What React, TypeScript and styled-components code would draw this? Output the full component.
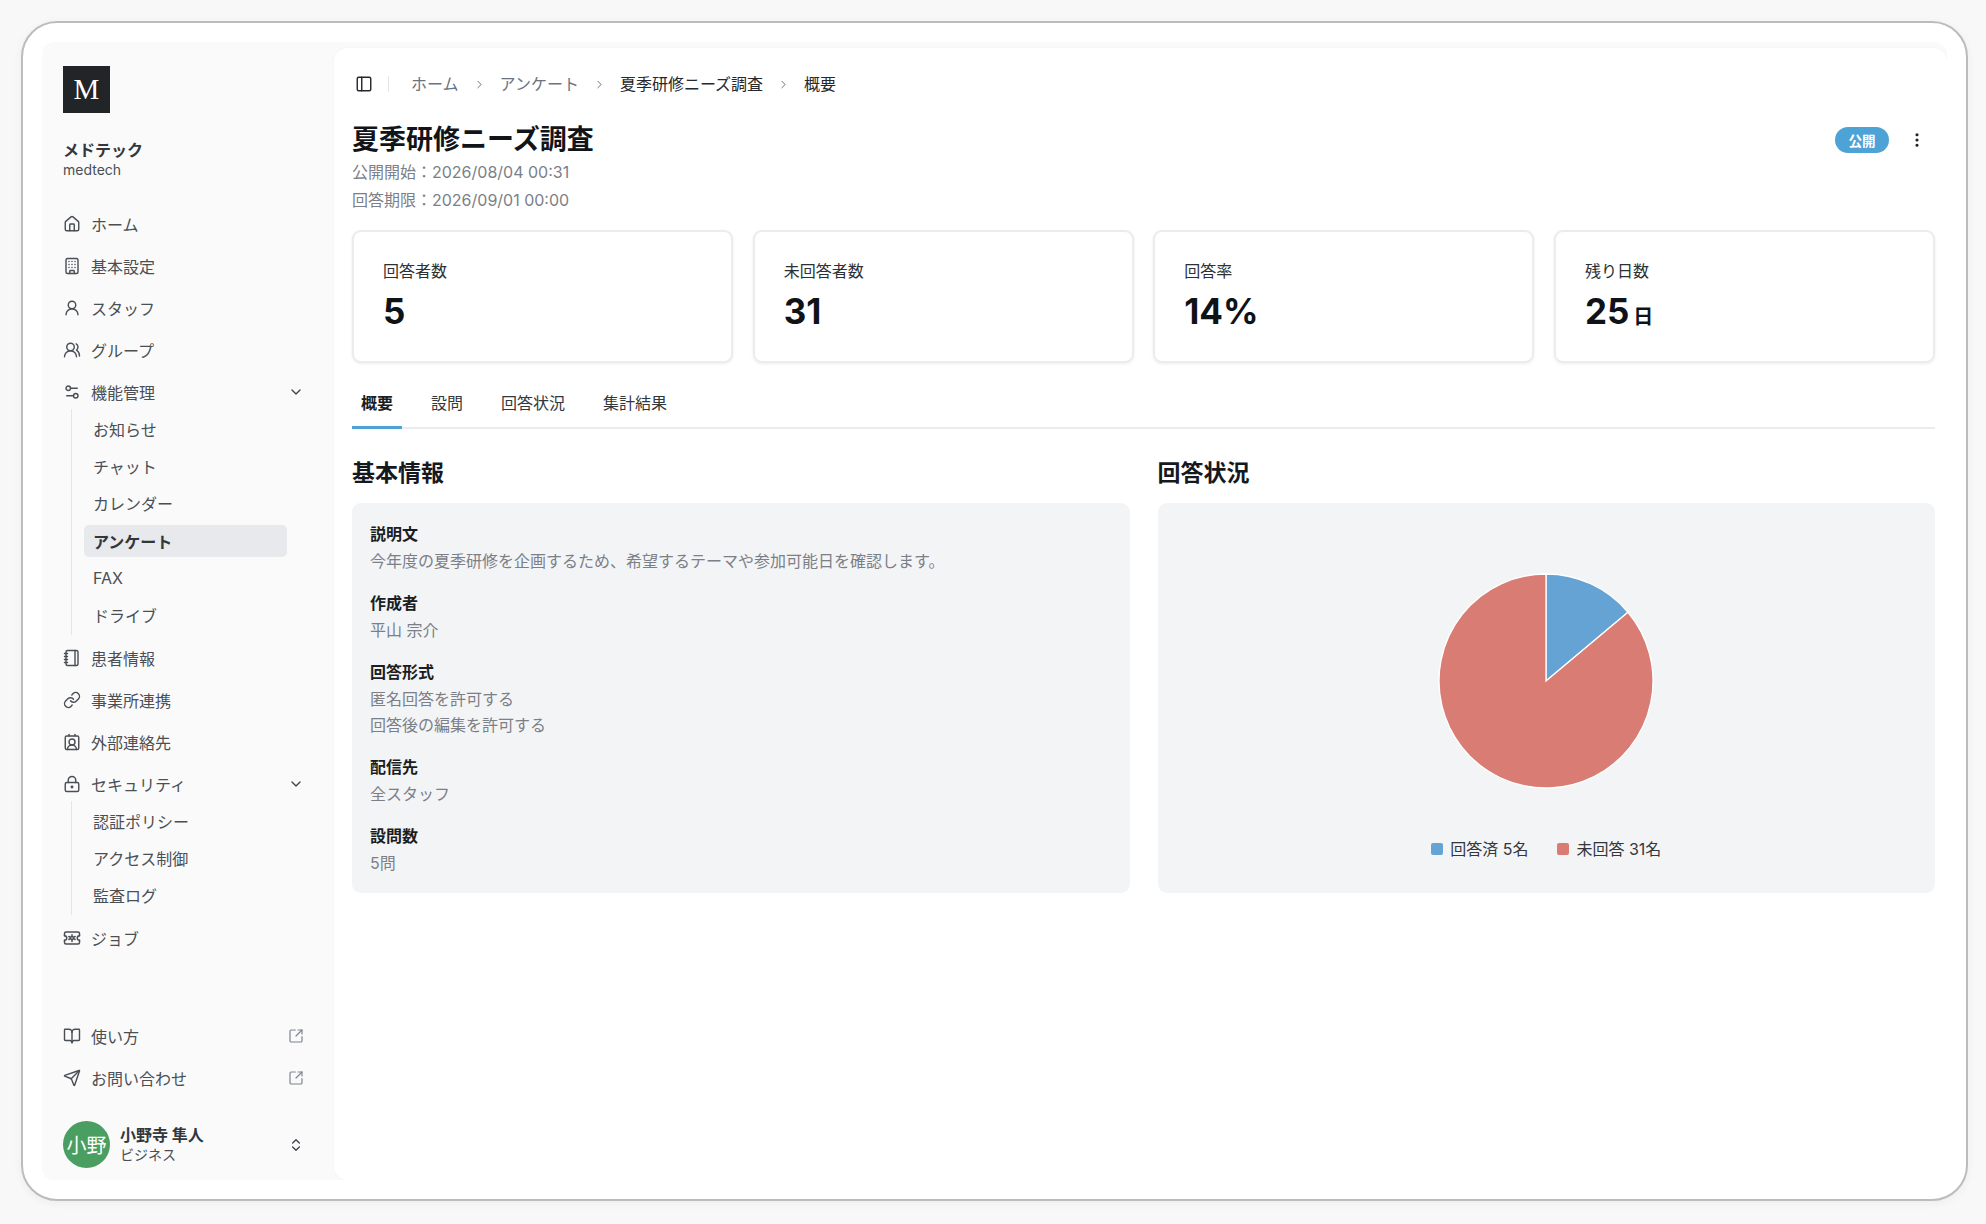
import React from "react";
import styled, { createGlobalStyle } from "styled-components";
import {
  House,
  Building,
  UserRound,
  UsersRound,
  Settings2,
  ChevronDown,
  ChevronRight,
  ChevronsUpDown,
  Notebook,
  Link as LinkIcon,
  ContactRound,
  LockKeyhole,
  BookOpen,
  Send,
  SquareArrowOutUpRight,
  PanelLeft,
  EllipsisVertical,
} from "lucide-react";

const GlobalStyle = createGlobalStyle`
  html, body {
    margin: 0;
    padding: 0;
    height: 100%;
    background: #f8f8f8;
    font-family: Inter, "Noto Sans CJK JP", sans-serif;
    font-size: 16px;
    color: #1f2328;
  }
  #root { height: 100%; }
  * { box-sizing: border-box; }
`;

function JobIcon() {
  return (
    <svg width="18" height="18" viewBox="0 0 24 24" fill="none" stroke="currentColor" strokeWidth="2" strokeLinecap="round" strokeLinejoin="round">
      <path d="M2 9V6a2 2 0 0 1 2-2h16a2 2 0 0 1 2 2v3" />
      <path d="M2 15v3a2 2 0 0 0 2 2h16a2 2 0 0 0 2-2v-3" />
      <path d="M2 9a3 3 0 0 1 0 6" />
      <path d="M22 9a3 3 0 0 0 0 6" />
      <circle cx="12" cy="12" r="2" />
      <path d="M12 7.5v1.5M12 15v1.5M7.8 10l1.4.8M14.8 13.2l1.4.8M7.8 14l1.4-.8M14.8 10.8l1.4-.8" />
    </svg>
  );
}

const slices = { done: 5, total: 36 };

function Pie() {
  const r = 107;
  const c = 108;
  const angle = (slices.done / slices.total) * Math.PI * 2;
  const x = c + r * Math.sin(angle);
  const y = c - r * Math.cos(angle);
  return (
    <svg width="216" height="216" viewBox="0 0 216 216">
      <path d={`M${c} ${c} L${c} ${c - r} A${r} ${r} 0 0 1 ${x} ${y} Z`} fill="#64a3d3" stroke="#fff" strokeWidth="1.3" />
      <path d={`M${c} ${c} L${x} ${y} A${r} ${r} 0 1 1 ${c} ${c - r} Z`} fill="#d97c74" stroke="#fff" strokeWidth="1.3" />
    </svg>
  );
}

const iconProps = { size: 18, strokeWidth: 1.9 };

export default function App() {
  return (
    <>
      <GlobalStyle />
      <Page>
        <Frame>
          <Shell>
            <Sidebar>
              <Logo>M</Logo>
              <OrgName>メドテック</OrgName>
              <OrgSlug>medtech</OrgSlug>
              <NavList>
                <NavItem><House {...iconProps} /><span>ホーム</span></NavItem>
                <NavItem><Building {...iconProps} /><span>基本設定</span></NavItem>
                <NavItem><UserRound {...iconProps} /><span>スタッフ</span></NavItem>
                <NavItem><UsersRound {...iconProps} /><span>グループ</span></NavItem>
                <NavItem>
                  <Settings2 {...iconProps} /><span>機能管理</span>
                  <Trailing><ChevronDown size={16} strokeWidth={2} /></Trailing>
                </NavItem>
                <SubList>
                  <SubItem>お知らせ</SubItem>
                  <SubItem>チャット</SubItem>
                  <SubItem>カレンダー</SubItem>
                  <SubItem $active>アンケート</SubItem>
                  <SubItem>FAX</SubItem>
                  <SubItem>ドライブ</SubItem>
                </SubList>
                <NavItem><Notebook {...iconProps} /><span>患者情報</span></NavItem>
                <NavItem><LinkIcon {...iconProps} /><span>事業所連携</span></NavItem>
                <NavItem><ContactRound {...iconProps} /><span>外部連絡先</span></NavItem>
                <NavItem>
                  <LockKeyhole {...iconProps} /><span>セキュリティ</span>
                  <Trailing><ChevronDown size={16} strokeWidth={2} /></Trailing>
                </NavItem>
                <SubList>
                  <SubItem>認証ポリシー</SubItem>
                  <SubItem>アクセス制御</SubItem>
                  <SubItem>監査ログ</SubItem>
                </SubList>
                <NavItem><JobIcon /><span>ジョブ</span></NavItem>
              </NavList>
              <FooterNav>
                <NavItem>
                  <BookOpen {...iconProps} /><span>使い方</span>
                  <Trailing $muted><SquareArrowOutUpRight size={16} strokeWidth={1.8} /></Trailing>
                </NavItem>
                <NavItem>
                  <Send {...iconProps} /><span>お問い合わせ</span>
                  <Trailing $muted><SquareArrowOutUpRight size={16} strokeWidth={1.8} /></Trailing>
                </NavItem>
              </FooterNav>
              <UserRow>
                <Avatar>小野</Avatar>
                <UserText>
                  <UserName>小野寺 隼人</UserName>
                  <UserRole>ビジネス</UserRole>
                </UserText>
                <Trailing><ChevronsUpDown size={16} strokeWidth={2} /></Trailing>
              </UserRow>
            </Sidebar>
            <Main>
              <Breadcrumb>
                <PanelLeft size={18} strokeWidth={1.9} color="#24282d" />
                <CrumbDivider />
                <Crumb>ホーム</Crumb>
                <CrumbSep><ChevronRight size={13} strokeWidth={1.8} /></CrumbSep>
                <Crumb>アンケート</Crumb>
                <CrumbSep><ChevronRight size={13} strokeWidth={1.8} /></CrumbSep>
                <Crumb $current>夏季研修ニーズ調査</Crumb>
                <CrumbSep><ChevronRight size={13} strokeWidth={1.8} /></CrumbSep>
                <Crumb $current>概要</Crumb>
              </Breadcrumb>
              <TitleRow>
                <Title>夏季研修ニーズ調査</Title>
                <TitleActions>
                  <Badge>公開</Badge>
                  <Kebab><EllipsisVertical size={18} strokeWidth={2.2} /></Kebab>
                </TitleActions>
              </TitleRow>
              <Meta>公開開始：2026/08/04 00:31</Meta>
              <Meta>回答期限：2026/09/01 00:00</Meta>
              <Stats>
                <StatCard><StatLabel>回答者数</StatLabel><StatValue>5</StatValue></StatCard>
                <StatCard><StatLabel>未回答者数</StatLabel><StatValue>31</StatValue></StatCard>
                <StatCard><StatLabel>回答率</StatLabel><StatValue>14%</StatValue></StatCard>
                <StatCard><StatLabel>残り日数</StatLabel><StatValue>25<StatUnit>日</StatUnit></StatValue></StatCard>
              </Stats>
              <Tabs>
                <Tab $active>概要</Tab>
                <Tab>設問</Tab>
                <Tab>回答状況</Tab>
                <Tab>集計結果</Tab>
              </Tabs>
              <Columns>
                <Column>
                  <SectionTitle>基本情報</SectionTitle>
                  <InfoPanel>
                    <InfoGroup><InfoLabel>説明文</InfoLabel><InfoValue>今年度の夏季研修を企画するため、希望するテーマや参加可能日を確認します。</InfoValue></InfoGroup>
                    <InfoGroup><InfoLabel>作成者</InfoLabel><InfoValue>平山 宗介</InfoValue></InfoGroup>
                    <InfoGroup><InfoLabel>回答形式</InfoLabel><InfoValue>匿名回答を許可する</InfoValue><InfoValue>回答後の編集を許可する</InfoValue></InfoGroup>
                    <InfoGroup><InfoLabel>配信先</InfoLabel><InfoValue>全スタッフ</InfoValue></InfoGroup>
                    <InfoGroup><InfoLabel>設問数</InfoLabel><InfoValue>5問</InfoValue></InfoGroup>
                  </InfoPanel>
                </Column>
                <Column>
                  <SectionTitle>回答状況</SectionTitle>
                  <ChartPanel>
                    <Pie />
                    <Legend>
                      <LegendItem><Swatch $color="#64a3d3" />回答済 5名</LegendItem>
                      <LegendItem><Swatch $color="#d97c74" />未回答 31名</LegendItem>
                    </Legend>
                  </ChartPanel>
                </Column>
              </Columns>
            </Main>
          </Shell>
        </Frame>
      </Page>
    </>
  );
}

const Page = styled.div`
  height: 1224px;
  padding: 21px 18px 23px 21px;
`;
const Frame = styled.div`
  height: 100%;
  padding: 19px;
  background: #fff;
  border: 2px solid #bcbcbc;
  border-radius: 36px;
  box-shadow: 0 2px 10px rgba(0, 0, 0, 0.05);
`;
const Shell = styled.div`
  height: 100%;
  display: flex;
  background: #fafafa;
  border-radius: 12px;
  overflow: hidden;
`;
const Sidebar = styled.aside`
  width: 292px;
  flex: none;
  display: flex;
  flex-direction: column;
  padding: 24px 30px 12px 21px;
  color: #4a4f55;
`;
const Logo = styled.div`
  width: 47px;
  height: 47px;
  display: flex;
  align-items: center;
  justify-content: center;
  background: #212527;
  color: #fff;
  font-family: "Liberation Serif", serif;
  font-size: 29px;
`;
const OrgName = styled.div`
  margin-top: 26px;
  font-size: 16px;
  line-height: 22px;
  font-weight: 700;
  color: #33373c;
`;
const OrgSlug = styled.div`
  font-size: 14px;
  line-height: 18px;
  color: #4a4f55;
`;
const NavList = styled.nav`
  margin-top: 29px;
  display: flex;
  flex-direction: column;
  gap: 10px;
`;
const NavItem = styled.div`
  height: 32px;
  display: flex;
  align-items: center;
  gap: 10px;
  font-size: 16px;
  color: #4a4f55;
  svg { flex: none; }
`;
const Trailing = styled.span<{ $muted?: boolean }>`
  margin-left: auto;
  width: 16px;
  height: 16px;
  display: flex;
  color: ${(p) => (p.$muted ? "#7d8590" : "#3f4349")};
`;
const SubList = styled.div`
  margin: -9px 17px -3px 8px;
  padding: 4px 0 4px 12px;
  border-left: 1px solid #e4e5e7;
  display: flex;
  flex-direction: column;
  gap: 5.2px;
`;
const SubItem = styled.div<{ $active?: boolean }>`
  height: 32px;
  padding-left: 9px;
  display: flex;
  align-items: center;
  border-radius: 5px;
  font-size: 16px;
  font-weight: ${(p) => (p.$active ? 700 : 400)};
  color: ${(p) => (p.$active ? "#33373c" : "#4a4f55")};
  background: ${(p) => (p.$active ? "#e8e9ec" : "transparent")};
`;
const FooterNav = styled.div`
  margin-top: auto;
  display: flex;
  flex-direction: column;
  gap: 10px;
`;
const UserRow = styled.div`
  margin-top: 27px;
  display: flex;
  align-items: center;
  gap: 10px;
`;
const Avatar = styled.div`
  width: 47px;
  height: 47px;
  flex: none;
  border-radius: 50%;
  background: #4a9e62;
  color: #fff;
  font-size: 20px;
  display: flex;
  align-items: center;
  justify-content: center;
`;
const UserText = styled.div`
  display: flex;
  flex-direction: column;
`;
const UserName = styled.div`
  font-size: 16px;
  line-height: 21px;
  font-weight: 700;
  color: #33373c;
`;
const UserRole = styled.div`
  font-size: 14px;
  line-height: 18px;
  color: #4a4f55;
`;
const Main = styled.main`
  flex: 1;
  min-width: 0;
  margin-top: 6px;
  padding: 24px 12px 0 18px;
  background: #fff;
  border-radius: 14px 14px 0 14px;
  box-shadow: 0 0 3px rgba(0, 0, 0, 0.04);
`;
const Breadcrumb = styled.div`
  height: 24px;
  display: flex;
  align-items: center;
  padding-left: 3px;
`;
const CrumbDivider = styled.span`
  width: 1px;
  height: 16px;
  margin: 0 22px 0 15px;
  background: #e4e5e7;
`;
const Crumb = styled.span<{ $current?: boolean }>`
  font-size: 16px;
  line-height: 24px;
  color: ${(p) => (p.$current ? "#25292e" : "#6b7280")};
`;
const CrumbSep = styled.span`
  width: 13px;
  margin: 0 14px;
  display: flex;
  color: #6b7280;
`;
const TitleRow = styled.div`
  margin-top: 26px;
  padding-right: 4px;
  display: flex;
  align-items: center;
  justify-content: space-between;
`;
const Title = styled.h1`
  margin: 0;
  font-size: 27px;
  line-height: 36px;
  font-weight: 700;
  color: #111418;
`;
const TitleActions = styled.div`
  display: flex;
  align-items: center;
  gap: 14px;
`;
const Badge = styled.span`
  width: 54px;
  height: 26px;
  display: flex;
  align-items: center;
  justify-content: center;
  border-radius: 13px;
  background: #4ea3d6;
  color: #fff;
  font-size: 13.5px;
  font-weight: 700;
`;
const Kebab = styled.span`
  width: 28px;
  height: 28px;
  display: flex;
  align-items: center;
  justify-content: center;
  color: #1f2328;
`;
const Meta = styled.div`
  font-size: 16px;
  line-height: 28px;
  color: #7b8088;
`;
const Stats = styled.div`
  margin-top: 16px;
  display: grid;
  grid-template-columns: repeat(4, 1fr);
  gap: 19.5px;
`;
const StatCard = styled.div`
  height: 133px;
  padding: 27px 29px;
  background: #fff;
  border: 2px solid #ececee;
  border-radius: 9px;
  box-shadow: 0 1px 3px rgba(0, 0, 0, 0.08);
`;
const StatLabel = styled.div`
  font-size: 16px;
  line-height: 24px;
  color: #2d3136;
`;
const StatValue = styled.div`
  margin-top: 6px;
  font-size: 35px;
  line-height: 44px;
  font-weight: 700;
  color: #0f1318;
`;
const StatUnit = styled.span`
  margin-left: 4px;
  font-size: 20px;
  font-weight: 700;
`;
const Tabs = styled.div`
  margin-top: 20px;
  display: flex;
  gap: 20px;
  border-bottom: 2px solid #ececee;
`;
const Tab = styled.div<{ $active?: boolean }>`
  padding: 8px 9px 11px;
  margin-bottom: -2px;
  font-size: 16px;
  line-height: 24px;
  font-weight: ${(p) => (p.$active ? 700 : 400)};
  color: ${(p) => (p.$active ? "#1a1e23" : "#33373c")};
  border-bottom: 3px solid ${(p) => (p.$active ? "#4ea3d6" : "transparent")};
`;
const Columns = styled.div`
  margin-top: 28px;
  display: grid;
  grid-template-columns: 1fr 1fr;
  gap: 28px;
`;
const Column = styled.section`
  display: flex;
  flex-direction: column;
`;
const SectionTitle = styled.h2`
  margin: 0 0 14px;
  font-size: 23px;
  line-height: 32px;
  font-weight: 700;
  color: #15191e;
`;
const InfoPanel = styled.div`
  flex: 1;
  padding: 20px 18px 17px;
  display: flex;
  flex-direction: column;
  gap: 18px;
  background: #f3f4f6;
  border-radius: 9px;
`;
const InfoGroup = styled.div``;
const InfoLabel = styled.div`
  margin-bottom: 3px;
  font-size: 16px;
  line-height: 22px;
  font-weight: 700;
  color: #1a1e23;
`;
const InfoValue = styled.div`
  font-size: 16px;
  line-height: 26px;
  color: #7b8088;
`;
const ChartPanel = styled.div`
  flex: 1;
  padding-top: 70px;
  display: flex;
  flex-direction: column;
  align-items: center;
  background: #f3f4f6;
  border-radius: 9px;
`;
const Legend = styled.div`
  margin-top: 48px;
  display: flex;
  gap: 29px;
`;
const LegendItem = styled.div`
  display: flex;
  align-items: center;
  gap: 7px;
  font-size: 16px;
  line-height: 24px;
  color: #33373c;
`;
const Swatch = styled.span<{ $color: string }>`
  width: 12px;
  height: 12px;
  border-radius: 2px;
  background: ${(p) => p.$color};
`;
